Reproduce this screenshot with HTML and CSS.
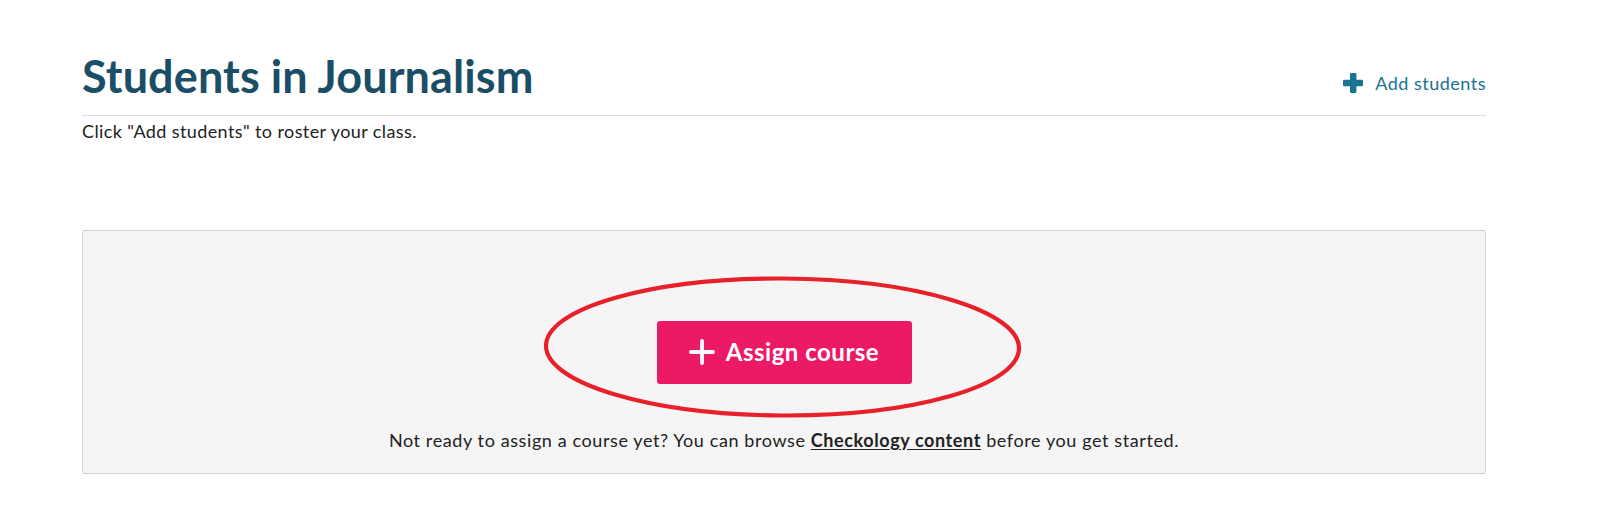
FILE: index.html
```html
<!DOCTYPE html>
<html lang="en">
<head>
<meta charset="utf-8">
<title>Students in Journalism</title>
<link rel="stylesheet" href="styles.css">
</head>
<body>
<main class="page">
  <header class="head">
    <h1 class="title">Students in Journalism</h1>
    <a class="add" href="#">
      <svg class="add-icon" viewBox="0 0 20 20" width="20" height="20" aria-hidden="true"><rect x="7" y="0" width="6.4" height="20" rx="1.2" fill="#1a7391"/><rect x="0" y="6.8" width="20" height="6.4" rx="1.2" fill="#1a7391"/></svg>
      <span>Add students</span>
    </a>
  </header>
  <p class="hint">Click "Add students" to roster your class.</p>
  <section class="empty">
    <div class="cta">
      <button class="assign" type="button">
        <svg class="assign-icon" viewBox="0 0 26 26" width="26" height="26" aria-hidden="true"><path d="M13 2v22M2 13h22" stroke="#fff" stroke-width="3.8" stroke-linecap="round" fill="none"/></svg>
        <span>Assign course</span>
      </button>
      <svg class="ring" viewBox="0 0 480 144" width="480" height="144" aria-hidden="true"><ellipse cx="239.5" cy="71" rx="236.5" ry="68.5" fill="none" stroke="#e8202a" stroke-width="4.2" transform="rotate(0.3 239.5 71)"/></svg>
    </div>
    <p class="browse">Not ready to assign a course yet? You can browse <a href="#">Checkology content</a> before you get started.</p>
  </section>
</main>
</body>
</html>
```
FILE: styles.css
```css
* { box-sizing: border-box; }
html, body { margin: 0; padding: 0; background: #fff; }
body {
  font-family: Lato, "Open Sans", "Liberation Sans", sans-serif;
  color: #222;
}
.page {
  width: 1404px;
  margin-left: 82px;
  padding-top: 50px;
}
.head {
  display: flex;
  justify-content: space-between;
  align-items: flex-end;
  border-bottom: 1px solid #d6dee4;
  padding-bottom: 13px;
}
.title {
  margin: 0;
  font-size: 45px;
  line-height: 52px;
  font-weight: 700;
  color: #1a4e66;
  letter-spacing: 0.1px;
}
.add {
  display: flex;
  align-items: center;
  gap: 12px;
  color: #1a7391;
  text-decoration: none;
  font-size: 18px;
  letter-spacing: 0.5px;
  margin-bottom: 8px;
}
.add-icon { display: block; }
.hint {
  margin: 4px 0 0;
  font-size: 18px;
  line-height: 22px;
  letter-spacing: 0.4px;
}
.empty {
  margin-top: 88px;
  height: 244px;
  background: #f5f5f5;
  border: 1px solid #d3d3d3;
  border-radius: 2px;
  display: flex;
  flex-direction: column;
  align-items: center;
  padding-top: 90px;
}
.cta {
  position: relative;
}
.assign {
  display: flex;
  align-items: center;
  justify-content: center;
  gap: 11px;
  width: 255px;
  height: 63px;
  background: #ec1a66;
  border: none;
  border-radius: 3px;
  color: #fff;
  font-family: inherit;
  font-size: 24px;
  font-weight: 700;
  letter-spacing: 0.5px;
  padding: 0 0 3px 0;
}
.assign-icon { display: block; margin-top: 2px; }
.ring {
  position: absolute;
  left: -114px;
  top: -45px;
  pointer-events: none;
}
.browse {
  margin: 45px 0 0;
  font-size: 18px;
  line-height: 22px;
  letter-spacing: 0.6px;
}
.browse a {
  color: #222;
  font-weight: 700;
  text-decoration: underline;
  text-underline-offset: 2px;
}
```
